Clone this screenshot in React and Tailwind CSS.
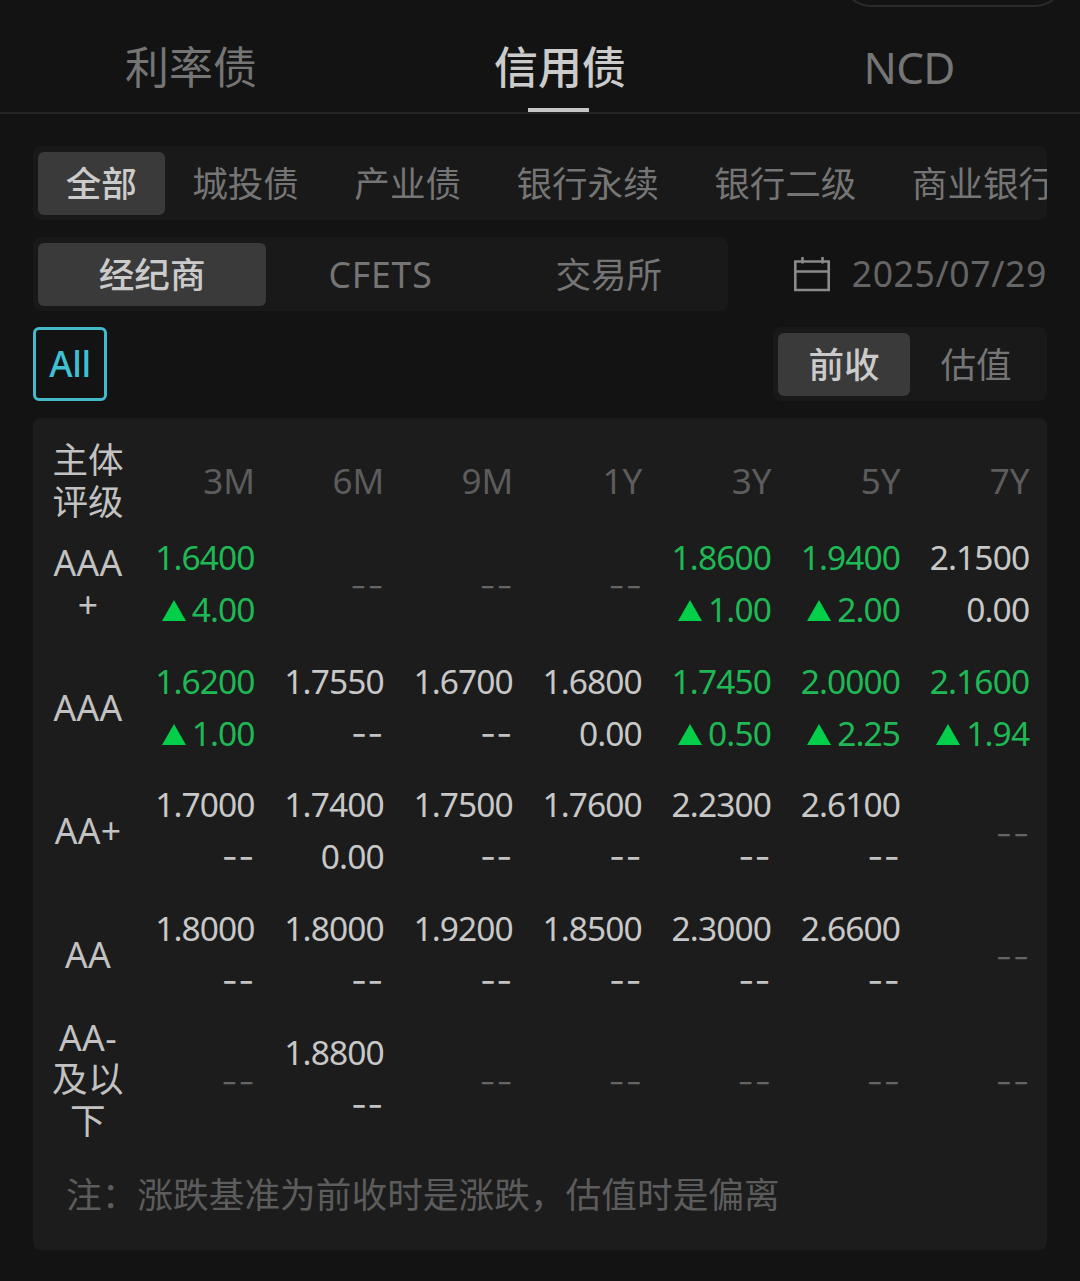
import React, { useState } from "react";
import clsx from "clsx";

const TABS = [
  { name: "利率债", width: "w-[382px]" },
  { name: "信用债", width: "w-[356px]" },
  { name: "NCD", width: "w-[342px] tracking-[-0.8px]" },
];
const CATEGORIES = ["全部", "城投债", "产业债", "银行永续", "银行二级", "商业银行债"];
const SOURCES = ["经纪商", "CFETS", "交易所"];
const BASES = ["前收", "估值"];
const TERMS = ["3M", "6M", "9M", "1Y", "3Y", "5Y", "7Y"];

// [yield, change in bp]
const ROWS = [
  {
    rating: ["AAA", "+"],
    cells: [["1.6400", "4.00"], null, null, null, ["1.8600", "1.00"], ["1.9400", "2.00"], ["2.1500", "0.00"]],
  },
  {
    rating: ["AAA"],
    cells: [["1.6200", "1.00"], ["1.7550"], ["1.6700"], ["1.6800", "0.00"], ["1.7450", "0.50"], ["2.0000", "2.25"], ["2.1600", "1.94"]],
  },
  {
    rating: ["AA+"],
    cells: [["1.7000"], ["1.7400", "0.00"], ["1.7500"], ["1.7600"], ["2.2300"], ["2.6100"], null],
  },
  {
    rating: ["AA"],
    cells: [["1.8000"], ["1.8000"], ["1.9200"], ["1.8500"], ["2.3000"], ["2.6600"], null],
  },
  {
    rating: ["AA-", "及以", "下"],
    cells: [null, ["1.8800"], null, null, null, null, null],
  },
];

const Dashes = ({ muted }) => (
  <span
    className={clsx(
      "font-['Inter',sans-serif] leading-none",
      muted
        ? "pt-[3px] text-[38px] font-light text-[#656565]"
        : "pt-px text-[35px] font-normal tracking-[0.3px] text-[#c2c2c2]"
    )}
  >
    --
  </span>
);

const Segment = ({ label, active, onClick, className }) => (
  <button
    onClick={onClick}
    className={clsx(
      "flex h-[63px] shrink-0 items-center justify-center rounded-md whitespace-nowrap",
      active ? "bg-[#3a3a3a] pt-px font-medium text-[#cbcbcb]" : "pt-px text-[#757575]",
      className
    )}
  >
    {label}
  </button>
);

const Cell = ({ data }) => {
  if (!data) {
    return (
      <div className="flex items-center justify-end pr-[17px]">
        <Dashes muted />
      </div>
    );
  }

  const [value, change] = data;
  const up = parseFloat(change) > 0;

  return (
    <div
      className={clsx(
        "flex flex-col items-end pt-[9px] pr-[17.5px] text-[33.5px] leading-[52px] tracking-[-0.9px]",
        up ? "text-[#1eb955]" : "text-[#c8c8c8]"
      )}
    >
      <div className="h-[52px]">{value}</div>
      <div className="flex h-[52px] items-center">
        {up && (
          <svg className="mt-[3px] mr-[6px] h-[21px] w-6" viewBox="0 0 24 21">
            <path d="M12 0L24 21H0Z" fill="#04cf4b" />
          </svg>
        )}
        {change || <Dashes />}
      </div>
    </div>
  );
};

const App = () => {
  const [tab, setTab] = useState("信用债");
  const [category, setCategory] = useState("全部");
  const [source, setSource] = useState("经纪商");
  const [basis, setBasis] = useState("前收");

  return (
    <div
      lang="zh-CN"
      className="h-[1281px] w-[1080px] overflow-hidden bg-[#131313] font-['Noto_Sans','Noto_Sans_CJK_SC',sans-serif] text-[35.6px] leading-none"
    >
      {/* Tabs */}
      <div className="relative flex h-[114px] border-b-2 border-[#252525]">
        <div className="absolute top-[-56px] right-[14px] h-[63px] w-[226px] rounded-full border-2 border-[#2b2b2b]" />
        {TABS.map(({ name, width }) => (
          <button
            key={name}
            onClick={() => setTab(name)}
            className={clsx(
              "relative flex shrink-0 items-center justify-center pt-[22px] text-[44px]",
              width,
              tab === name ? "font-medium text-[#cbcbcb]" : "text-[#757575]"
            )}
          >
            {name}
            {tab === name && (
              <span className="absolute bottom-0 left-1/2 ml-[-32px] h-1 w-[61px] bg-[#c6c6c6]" />
            )}
          </button>
        ))}
      </div>

      <div className="px-[33px] pt-[32px]">
        {/* Bond categories */}
        <div className="flex h-[74px] items-center overflow-hidden rounded-lg bg-[#191919] pl-[5px]">
          {CATEGORIES.map((name) => (
            <Segment
              key={name}
              label={name}
              active={category === name}
              onClick={() => setCategory(name)}
              className="px-[27.7px]"
            />
          ))}
        </div>

        {/* Quote source and date */}
        <div className="mt-[17px] flex h-[74px] items-center justify-between">
          <div className="flex h-full w-[695px] items-center rounded-lg bg-[#191919] px-[5px]">
            {SOURCES.map((name) => (
              <Segment
                key={name}
                label={name}
                active={source === name}
                onClick={() => setSource(name)}
                className={clsx("flex-1", name === "CFETS" && "tracking-[0.8px]")}
              />
            ))}
          </div>
          <div className="flex items-center text-[#656565]">
            <svg className="mr-[22px] h-9 w-9" viewBox="0 0 36 36" fill="none" stroke="#8a8a8a" strokeWidth="2.6">
              <path d="M1.3 5.5H34.7V34H1.3ZM1.3 15.5H34.7M8.5 1V7.5M28.5 1V7.5" />
            </svg>
            <span className="tracking-[0.6px]">2025/07/29</span>
          </div>
        </div>

        <div className="mt-4 flex h-[74px] items-center justify-between">
          <button className="flex size-[74px] items-center justify-center rounded-md border-[3px] border-[#43b9ca] font-medium tracking-[-0.4px] text-[#3fc1d3]">
            All
          </button>
          <div className="flex h-full w-[274px] items-center rounded-lg bg-[#191919] px-[5px]">
            {BASES.map((name) => (
              <Segment
                key={name}
                label={name}
                active={basis === name}
                onClick={() => setBasis(name)}
                className="flex-1"
              />
            ))}
          </div>
        </div>

        {/* Yield matrix */}
        <div className="mt-[17px] h-[832px] rounded-lg bg-[#1c1c1c]">
          <div className="grid h-[104px] grid-cols-[110px_repeat(7,129.1px)]">
            <div className="flex flex-col items-center justify-center pt-[21px] text-[35.6px] leading-[41.5px] text-[#c2c2c2]">
              <div>主体</div>
              <div>评级</div>
            </div>
            {TERMS.map((term) => (
              <div key={term} className="flex items-center justify-end pt-[20px] pr-[17px] text-[35px] text-[#5c5c5c]">
                {term}
              </div>
            ))}
          </div>

          {ROWS.map((row) => (
            <div key={row.rating.join("")} className="grid h-[123.7px] grid-cols-[110px_repeat(7,129.1px)]">
              <div className="flex flex-col items-center justify-center text-[35.6px] leading-[41.5px] tracking-[0.3px] text-[#c2c2c2]">
                {row.rating.map((line) => (
                  <div key={line}>{line}</div>
                ))}
              </div>
              {row.cells.map((data, i) => (
                <Cell key={TERMS[i]} data={data} />
              ))}
            </div>
          ))}

          <p className="pt-[37px] pl-[33px] text-[35.7px] text-[#5c5c5c]">
            注：涨跌基准为前收时是涨跌，估值时是偏离
          </p>
        </div>
      </div>
    </div>
  );
};

export default App;
